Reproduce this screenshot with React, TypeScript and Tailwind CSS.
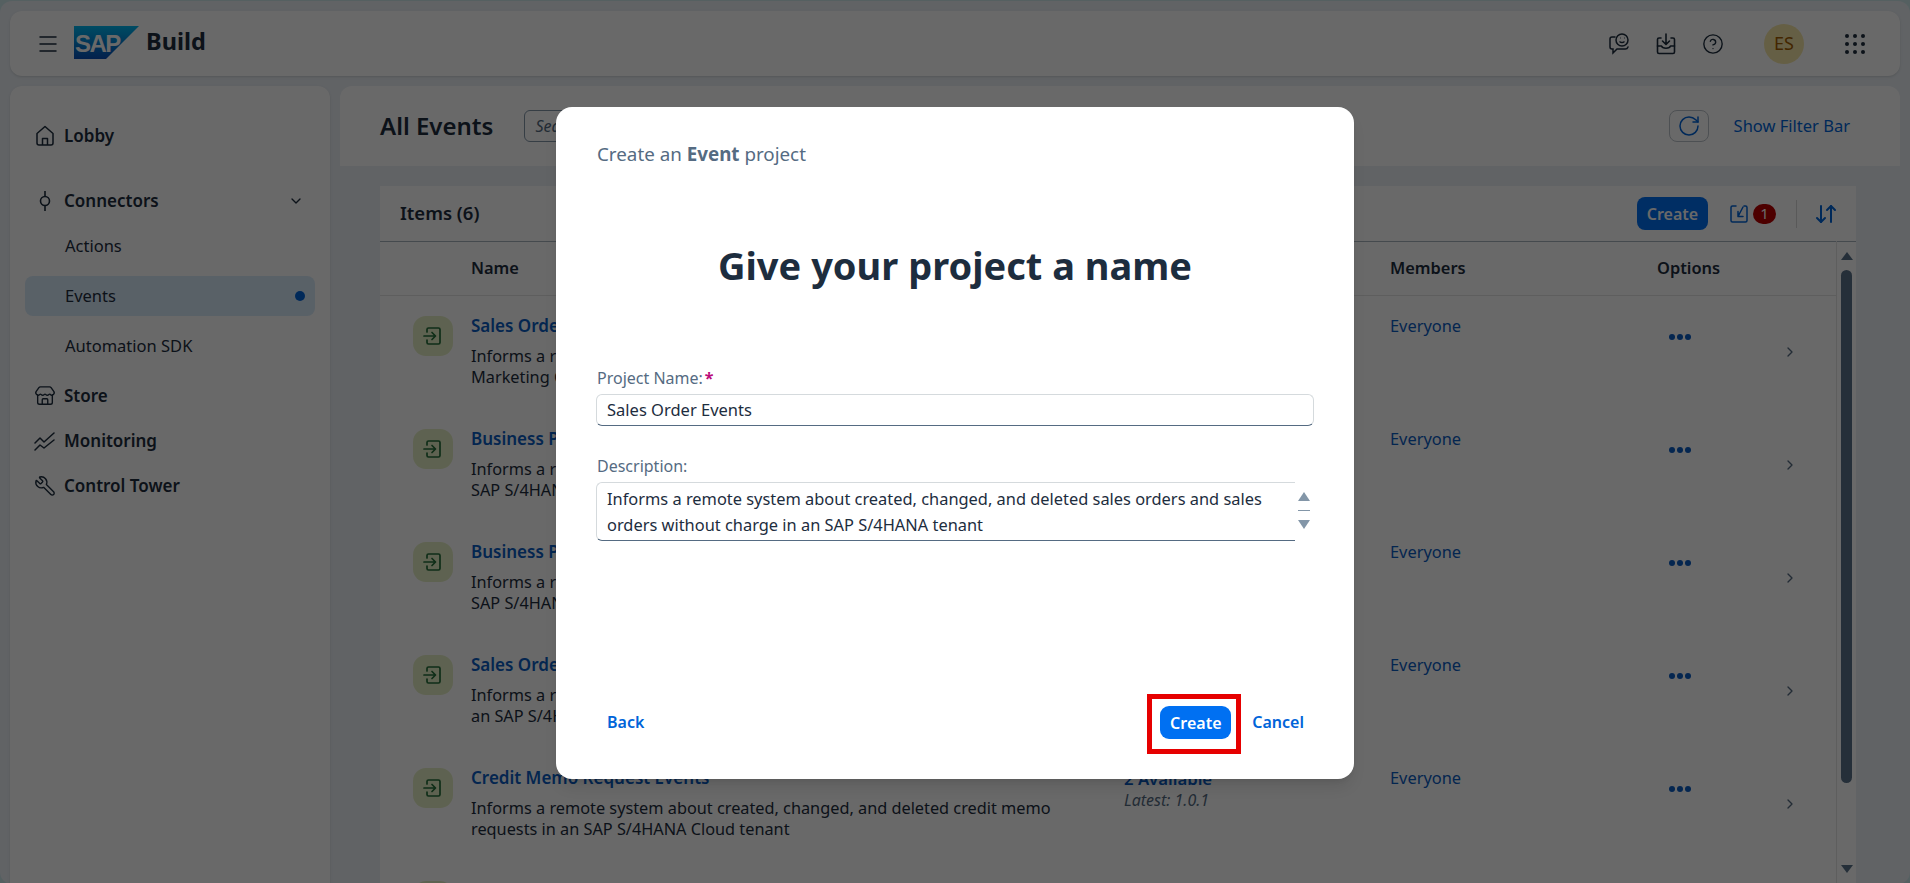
import { ChevronDown, ChevronRight, CircleHelp, Menu, RotateCw, Store, Wrench, ArrowDownUp } from "lucide-react";

const rows = [
   { title: "Sales Order Events", desc: ["Informs a remote system about sales orders that are created or changed in SAP", "Marketing Cloud and in an SAP S/4HANA Cloud tenant"], version: "3 Available", latest: "Latest: 1.1.0" },
   { title: "Business Partner Events", desc: ["Informs a remote system about created and changed business partners in an", "SAP S/4HANA Cloud tenant"], version: "2 Available", latest: "Latest: 1.0.2" },
   { title: "Business Partner Events", desc: ["Informs a remote system about created and changed business partners in an", "SAP S/4HANA tenant"], version: "2 Available", latest: "Latest: 1.0.2" },
   { title: "Sales Order Events", desc: ["Informs a remote system about created, changed, and deleted sales orders in", "an SAP S/4HANA Cloud tenant"], version: "2 Available", latest: "Latest: 1.0.1" },
   { title: "Credit Memo Request Events", desc: ["Informs a remote system about created, changed, and deleted credit memo", "requests in an SAP S/4HANA Cloud tenant"], version: "2 Available", latest: "Latest: 1.0.1" },
   { title: "", desc: [], version: "", latest: "" },
];

const EntryIcon = () => (
   <svg width="20" height="20" viewBox="0 0 20 20" fill="none" stroke="#256f3a" strokeWidth="1.7" strokeLinecap="round" strokeLinejoin="round">
      <path d="M4 6V3.500A1.500 1.500 0 0 1 5.500 2h10A1.500 1.500 0 0 1 17 3.500v13a1.500 1.500 0 0 1-1.500 1.500h-10A1.500 1.500 0 0 1 4 16.500V14" />
      <path d="M1 10h11M9 6.500l3.500 3.500L9 13.500" />
   </svg>
);

const NavHead: React.FC<{ icon: React.ReactNode; label: string; className?: string }> = ({ icon, label, className }) => (
   <div className={`flex items-center h-[24px] pl-[25px] ${className ?? ""}`}>
      <span className="w-[29px] shrink-0 text-[#1d2d3e]">{icon}</span>
      <span className="text-[17px] font-semibold text-[#1d2d3e]">{label}</span>
   </div>
);

const Row: React.FC<{ row: (typeof rows)[number] }> = ({ row }) => (
   <div className="grid grid-cols-[91px_653px_266px_267px_179px] h-[113px] pt-[20px] shrink-0">
      <div className="pl-[33px]">
         <div className="w-[40px] h-[40px] rounded-[13px] bg-[#e5efc4] flex items-center justify-center">
            <EntryIcon />
         </div>
      </div>
      {row.title && (
         <>
            <div>
               <div className="text-[17px] font-semibold leading-[22px] text-[#0a5cc2] -mt-[1px]">{row.title}</div>
               <div className="text-[16.3px] leading-[21px] mt-[9px] text-[#1d2d3e]">
                  {row.desc.map((d) => (
                     <div key={d}>{d}</div>
                  ))}
               </div>
            </div>
            <div>
               <div className="text-[16.7px] font-semibold leading-[22px] text-[#0a5cc2]">{row.version}</div>
               <div className="text-[16px] italic leading-[20px] text-[#556b82]">{row.latest}</div>
            </div>
            <div className="text-[16.4px] leading-[22px] text-[#0a5cc2] -mt-[1px]">Everyone</div>
            <div className="flex pl-[12px] pr-[38px] justify-between">
               <div className="flex gap-[2px] mt-[18px] h-[6px]">
                  <span className="w-[6px] h-[6px] rounded-full bg-[#0a5cc2]" />
                  <span className="w-[6px] h-[6px] rounded-full bg-[#0a5cc2]" />
                  <span className="w-[6px] h-[6px] rounded-full bg-[#0a5cc2]" />
               </div>
               <ChevronRight className="w-[16px] h-[16px] mt-[28px] text-[#556b82]" />
            </div>
         </>
      )}
   </div>
);

export default function App() {
   return (
      <div className="relative h-[883px] w-[1910px] overflow-hidden bg-[#cfe9ec] font-['Noto_Sans',sans-serif]">
         <div className="h-full mt-[1px] rounded-[12px] bg-[#ebf0f5] px-[10px] pt-[10px] flex flex-col gap-[10px]">
            {/* shell bar */}
            <header className="h-[65px] shrink-0 rounded-[12px] bg-white flex items-center pl-[26px] pr-[35px] shadow-sm">
               <Menu className="w-[24px] h-[24px] text-[#1d2d3e]" strokeWidth={1.5} />
               <svg width="65" height="33" viewBox="0 0 65 33" className="ml-[14px] -mt-[3px]">
                  <defs>
                     <linearGradient id="sapg" x1="0" y1="0" x2="0" y2="1">
                        <stop offset="0" stopColor="#00b8f1" />
                        <stop offset="1" stopColor="#0a4fb8" />
                     </linearGradient>
                  </defs>
                  <polygon points="0,0 65,0 32,33 0,33" fill="url(#sapg)" />
                  <text x="1" y="26" fontFamily="'Liberation Sans',sans-serif" fontWeight="700" fontSize="24" letterSpacing="-1.500" fill="white">SAP</text>
               </svg>
               <span className="ml-[7px] text-[23.5px] font-bold text-[#1d2d3e] -mt-[3px]">Build</span>
               <div className="ml-auto flex items-center text-[#1d2d3e]">
                  <svg width="22" height="22" viewBox="0 0 22 22" fill="none" stroke="currentColor" strokeWidth="1.500">
                     <path d="M7 4H4a2 2 0 0 0-2 2v8a2 2 0 0 0 2 2h1v4l4-4h8a3 3 0 0 0 3-2" strokeLinecap="round" />
                     <circle cx="14" cy="7" r="6" />
                     <path d="M11.500 8.500c1.500 1.300 3.500 1.300 5 0M12 5h.5M16 5h.5" />
                  </svg>
                  <svg width="20" height="22" viewBox="0 0 20 22" fill="none" stroke="currentColor" strokeWidth="1.600" strokeLinecap="round" strokeLinejoin="round" className="ml-[26px]">
                     <path d="M5 5H3a1.500 1.500 0 0 0-1.500 1.500V19A1.500 1.500 0 0 0 3 20.500h14a1.500 1.500 0 0 0 1.500-1.500V6.500A1.500 1.500 0 0 0 17 5h-2" />
                     <path d="M10 1v10M6.500 8l3.500 3.500L13.500 8M1.500 13h4c1 3 8 3 9 0h4" />
                  </svg>
                  <CircleHelp className="w-[22px] h-[22px] ml-[26px]" strokeWidth={1.500} />
                  <div className="w-[40px] h-[40px] rounded-full bg-[#f6e7a8] ml-[40px] flex items-center justify-center text-[18px] text-[#a45d00]">ES</div>
                  <div className="ml-[41px] grid grid-cols-3 gap-[4px]">
                     {[...Array(9).keys()].map((i) => (
                        <span key={i} className="w-[4px] h-[4px] rounded-full bg-[#1d2d3e]" />
                     ))}
                  </div>
               </div>
            </header>

            <div className="flex-1 flex gap-[10px] min-h-0">
               {/* side nav */}
               <aside className="w-[320px] shrink-0 rounded-t-[12px] bg-white pt-[38px] shadow-sm">
                  <NavHead
                     label="Lobby"
                     icon={
                        <svg width="20" height="22" viewBox="0 0 20 22" fill="none" stroke="currentColor" strokeWidth="1.500" strokeLinejoin="round">
                           <path d="M2 8.500 10 1.500l8 7V18a2 2 0 0 1-2 2H4a2 2 0 0 1-2-2Z" />
                           <path d="M7.500 20v-6.500h5V20" />
                        </svg>
                     }
                  />
                  <div className="relative mt-[41px]">
                     <NavHead
                        label="Connectors"
                        icon={
                           <svg width="20" height="22" viewBox="0 0 20 22" fill="none" stroke="currentColor" strokeWidth="1.600">
                              <circle cx="10" cy="11" r="4.500" />
                              <path d="M10 1v5.500M10 15.500V21" />
                           </svg>
                        }
                     />
                     <ChevronDown className="absolute right-[26px] top-[4px] w-[16px] h-[16px] text-[#1d2d3e]" />
                  </div>
                  <div className="mx-[15px] mt-[13px] flex flex-col gap-[10px] text-[16.5px] text-[#1d2d3e]">
                     <div className="h-[40px] pl-[40px] flex items-center">Actions</div>
                     <div className="h-[40px] pl-[40px] pr-[10px] flex items-center justify-between rounded-[8px] bg-[#d9ebfb]">
                        <span>Events</span>
                        <span className="w-[10px] h-[10px] rounded-full bg-[#0064d9]" />
                     </div>
                     <div className="h-[40px] pl-[40px] flex items-center">Automation SDK</div>
                  </div>
                  <NavHead className="mt-[18px]" label="Store" icon={<Store className="w-[22px] h-[22px] -ml-[1px]" strokeWidth={1.500} />} />
                  <NavHead
                     className="mt-[21px]"
                     label="Monitoring"
                     icon={
                        <svg width="22" height="22" viewBox="0 0 22 22" fill="none" stroke="currentColor" strokeWidth="1.500" strokeLinecap="round" strokeLinejoin="round" className="-ml-[1px]">
                           <path d="M1 13l5-5 4 4 10-9M1 20l5-5 4 3 10-8" />
                        </svg>
                     }
                  />
                  <NavHead className="mt-[21px]" label="Control Tower" icon={<Wrench className="w-[22px] h-[22px] -ml-[1px] -scale-x-100" strokeWidth={1.500} />} />
               </aside>

               {/* main content */}
               <main className="flex-1 min-w-0 flex flex-col">
                  <div className="h-[80px] shrink-0 rounded-t-[12px] bg-white flex items-center pl-[40px] pr-[50px]">
                     <h1 className="text-[24px] font-semibold text-[#1d2d3e]">All Events</h1>
                     <div className="ml-[31px] w-[300px] h-[32px] rounded-[6px] border border-[#8396a8] bg-white pl-[10px] flex items-center italic text-[16px] text-[#556b82]">Search</div>
                     <div className="ml-auto w-[40px] h-[32px] rounded-[8px] border border-[#bcc3ca] flex items-center justify-center">
                        <RotateCw className="w-[24px] h-[24px] text-[#0064d9]" strokeWidth={1.500} />
                     </div>
                     <span className="ml-[25px] text-[16.5px] text-[#0064d9]">Show Filter Bar</span>
                  </div>
                  <div className="flex-1 min-h-0 pt-[20px] pl-[40px] pr-[44px]">
                     <div className="h-full bg-white flex flex-col">
                        <div className="h-[56px] shrink-0 flex items-center pl-[20px] pr-[18px] border-b border-[#a9b4be]">
                           <span className="text-[18.5px] font-semibold text-[#1d2d3e] -mt-[1px]">Items (6)</span>
                           <span className="ml-auto h-[33px] w-[71px] rounded-[8px] bg-[#0070f2] text-white text-[16px] font-semibold flex items-center justify-center">Create</span>
                           <svg width="20" height="20" viewBox="0 0 20 20" fill="none" stroke="#0064d9" strokeWidth="1.500" strokeLinecap="round" strokeLinejoin="round" className="ml-[21px]">
                              <path d="M7 2H3.500A1.500 1.500 0 0 0 2 3.500v13A1.500 1.500 0 0 0 3.500 18h13a1.500 1.500 0 0 0 1.500-1.500v-13A1.500 1.500 0 0 0 16.500 2H15" />
                              <path d="M14 3 9 12.500M9 7.500v5h5" />
                           </svg>
                           <span className="ml-[4px] w-[23px] h-[20px] rounded-full bg-[#bb0000] text-white text-[15px] flex items-center justify-center">1</span>
                           <span className="ml-[20px] w-px h-[28px] bg-[#d9d9d9]" />
                           <ArrowDownUp className="ml-[17px] w-[24px] h-[24px] text-[#0064d9]" strokeWidth={2} />
                        </div>
                        <div className="flex-1 min-h-0 flex">
                           <div className="flex-1 min-w-0 flex flex-col overflow-hidden">
                              <div className="grid grid-cols-[91px_653px_266px_267px_179px] h-[54px] shrink-0 items-center border-b border-[#e5e5e5] text-[16.4px] font-semibold text-[#1d2d3e]">
                                 <span />
                                 <span>Name</span>
                                 <span>Versions</span>
                                 <span>Members</span>
                                 <span>Options</span>
                              </div>
                              {rows.map((r, i) => (
                                 <Row key={i} row={r} />
                              ))}
                           </div>
                           <div className="w-[20px] shrink-0 border-l border-[#e5e5e5] -mt-[1px] flex flex-col items-center pt-[11px]">
                              <span className="w-0 h-0 border-x-[6px] border-x-transparent border-b-[8px] border-b-[#5b738b]" />
                              <span className="w-[11px] h-[513px] rounded-full bg-[#5b738b] mt-[10px]" />
                              <span className="w-0 h-0 border-x-[6px] border-x-transparent border-t-[8px] border-t-[#5b738b] mt-[82px]" />
                           </div>
                        </div>
                     </div>
                  </div>
               </main>
            </div>
         </div>

         {/* dimming layer */}
         <div className="absolute inset-0 bg-black/59 flex items-start pl-[556px] pt-[107px]">
            <section className="w-[798px] h-[672px] rounded-[16px] bg-white pt-[36px] px-[40px] flex flex-col shadow-lg">
               <p className="pl-[1px] text-[18.8px] leading-[22px] text-[#556b82]">
                  Create an <b className="font-bold">Event</b> project
               </p>
               <h2 className="mt-[76px] text-center text-[38px] leading-[48px] font-bold text-[#1d2d3e]">Give your project a name</h2>
               <label className="mt-[78px] pl-[1px] text-[16px] leading-[22px] text-[#556b82]">
                  Project Name:<span className="ml-[2px] font-bold text-[#bb0b7a]">*</span>
               </label>
               <div className="mt-[5px] h-[32px] rounded-[6px] border border-[#d5dadd] border-b-[#556b82] flex items-center px-[10px] text-[16.5px] text-[#1d2d3e]">Sales Order Events</div>
               <label className="mt-[29px] pl-[1px] text-[16px] leading-[22px] text-[#556b82]">Description:</label>
               <div className="mt-[5px] flex">
                  <div className="w-[699px] h-[59px] rounded-l-[6px] border border-r-0 border-[#d5dadd] border-b-[#556b82] pl-[10px] py-[3px] text-[16.4px] leading-[26px] text-[#1d2d3e]">
                     <div>Informs a remote system about created, changed, and deleted sales orders and sales</div>
                     <div>orders without charge in an SAP S/4HANA tenant</div>
                  </div>
                  <div className="w-[14px] ml-[2px] flex flex-col items-center pt-[10px]">
                     <span className="w-0 h-0 border-x-[6px] border-x-transparent border-b-[9px] border-b-[#8396a8]" />
                     <span className="w-[12px] h-px bg-[#8396a8] mt-[9px]" />
                     <span className="w-0 h-0 border-x-[6px] border-x-transparent border-t-[9px] border-t-[#8396a8] mt-[9px]" />
                  </div>
               </div>
               <footer className="mt-auto mb-[25px] flex items-center justify-between pl-[11px] pr-[10px]">
                  <span className="text-[16px] font-semibold text-[#0064d9] -mt-[4px]">Back</span>
                  <div className="flex items-center">
                     <div className="w-[94px] h-[60px] border-[5px] border-[#e60000] flex items-center pl-[8px]">
                        <span className="w-[71px] h-[33px] -mt-[3px] rounded-[9px] bg-[#0070f2] text-white text-[16px] font-semibold flex items-center justify-center">Create</span>
                     </div>
                     <span className="ml-[11px] text-[16px] font-semibold text-[#0064d9] -mt-[4px]">Cancel</span>
                  </div>
               </footer>
            </section>
         </div>
      </div>
   );
}
